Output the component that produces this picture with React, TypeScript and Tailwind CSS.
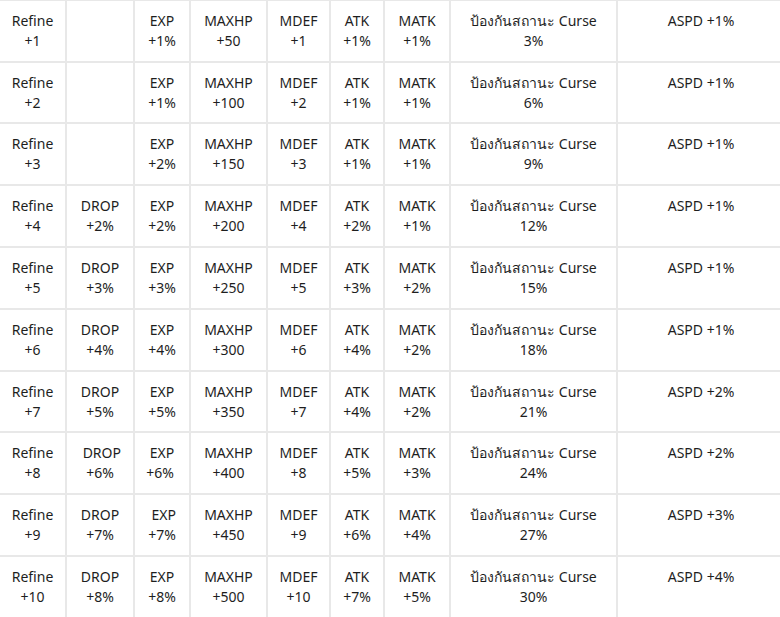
const cols = ["w-[67px]", "w-[68px]", "w-[56px]", "w-[77px]", "w-[63px]", "w-[54px]", "w-[66px]", "w-[167px]", "w-[166px]"];
const heights = ["h-[62px]", "h-[61px]", "h-[62px]", "h-[62px]", "h-[62px]", "h-[62px]", "h-[61px]", "h-[62px]", "h-[62px]", "h-[62px]"];

const maxhp = ["+50", "+100", "+150", "+200", "+250", "+300", "+350", "+400", "+450", "+500"];
const exp = ["+1%", "+1%", "+2%", "+2%", "+3%", "+4%", "+5%", "+6%\u00a0", "+7%", "+8%"];
const drop = ["", "", "", "+2%", "+3%", "+4%", "+5%", "+6%", "+7%", "+8%"];
const atk = ["+1%", "+1%", "+1%", "+2%", "+3%", "+4%", "+4%", "+5%", "+6%", "+7%"];
const matk = ["+1%", "+1%", "+1%", "+1%", "+2%", "+2%", "+2%", "+3%", "+4%", "+5%"];
const aspd = ["+1%", "+1%", "+1%", "+1%", "+1%", "+1%", "+2%", "+2%", "+3%", "+4%"];

function Cell({ w, lines, last }: { w: string; lines: string[]; last?: boolean }) {
  return (
    <div
      className={`${w} shrink-0 border-b-2 border-[#e8e8e8] pt-[10px] text-center ${last ? "" : "border-r-2"}`}
    >
      {lines.map((l, i) => (
        <div key={i} className="whitespace-pre">
          {l}
        </div>
      ))}
    </div>
  );
}

export default function App() {
  return (
    <div
      className="h-[617px] w-[780px] overflow-hidden bg-white text-[14px] leading-5 text-[#1e1e1e]"
      style={{ fontFamily: '"Noto Sans", sans-serif' }}
    >
      <div className="w-[800px] border-t border-[#e8e8e8]">
        {maxhp.map((hp, i) => {
          const n = i + 1;
          return (
            <div key={n} className={`flex ${heights[i]}`}>
              <Cell w={cols[0]} lines={["Refine", `+${n}`]} />
              <Cell
                w={cols[1]}
                lines={drop[i] ? [n === 8 ? "\u00a0DROP" : "DROP", drop[i]] : []}
              />
              <Cell w={cols[2]} lines={[n === 9 ? "\u00a0EXP" : "EXP", exp[i]]} />
              <Cell w={cols[3]} lines={["MAXHP", hp]} />
              <Cell w={cols[4]} lines={["MDEF", `+${n}`]} />
              <Cell w={cols[5]} lines={["ATK", atk[i]]} />
              <Cell w={cols[6]} lines={["MATK", matk[i]]} />
              <Cell w={cols[7]} lines={["ป้องกันสถานะ Curse", `${n * 3}%`]} />
              <Cell w={cols[8]} lines={[`ASPD ${aspd[i]}`]} last />
            </div>
          );
        })}
      </div>
    </div>
  );
}
